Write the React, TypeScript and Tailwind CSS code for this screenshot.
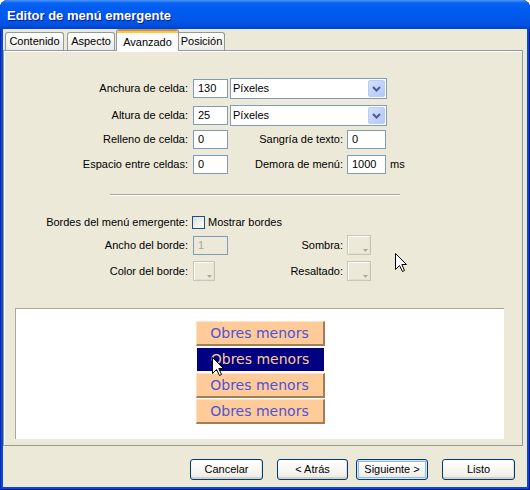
import React from "react";

function Cursor({ className }: { className: string }) {
  return (
    <svg className={className} width="13" height="20" viewBox="0 0 13 20">
      <polygon
        points="0.5,0.5 0.5,16.5 4.5,12.5 7.5,18.5 9.5,17.5 6.8,11.5 11.5,11.5"
        fill="#fff"
        stroke="#000"
        strokeWidth="1"
        strokeLinejoin="miter"
      />
    </svg>
  );
}

function TextBox({ value, w, disabled }: { value: string; w: string; disabled?: boolean }) {
  return (
    <div
      className={`${w} h-[19px] border border-[#7f9db9] flex items-center pl-[4px] ${
        disabled ? "bg-[#ece9d8] text-[#aca899]" : "bg-white text-black"
      }`}
    >
      {value}
    </div>
  );
}

function Select({ value }: { value: string }) {
  return (
    <div className="w-[157px] h-[21px] border border-[#7f9db9] bg-white flex items-center pl-[2px] pr-[1px]">
      <span className="flex-1">{value}</span>
      <div className="w-[17px] h-[17px] rounded-[2px] border border-[#bccbf2] bg-[linear-gradient(135deg,#d6e1fb_0%,#c2d3fb_50%,#b4c7f5_100%)] flex items-center justify-center">
        <svg width="9" height="6" viewBox="0 0 9 6">
          <path d="M1 1 L4.5 4.5 L8 1" stroke="#4d6185" strokeWidth="2" fill="none" />
        </svg>
      </div>
    </div>
  );
}

function ColorBox({ w }: { w: string }) {
  return (
    <div className={`${w} h-[20px] relative border border-[#c8c5b8] shadow-[inset_1px_1px_0_#ffffff,inset_-1px_-1px_0_#e2dfd2] bg-[#ece9d8]`}>
      <svg className="absolute right-[2px] bottom-[2px]" width="5" height="3" viewBox="0 0 5 3">
        <polygon points="0,0 5,0 2.5,3" fill="#aca899" />
      </svg>
    </div>
  );
}

function Button({ label, w, ml, focused }: { label: string; w: string; ml: string; focused?: boolean }) {
  return (
    <div
      className={`${w} ${ml} h-[21px] rounded-[3px] border border-[#003c74] flex items-center justify-center bg-[linear-gradient(to_bottom,#ffffff_0%,#f6f5f1_60%,#ebe9e2_100%)] ${
        focused
          ? "shadow-[inset_0_0_0_1px_#cee7ff,inset_0_0_0_2px_#98b8ea]"
          : "shadow-[inset_0_-2px_0_#d6d0c5,inset_-1px_0_0_#e3e0d6]"
      }`}
    >
      {label}
    </div>
  );
}

function MenuItem({ selected }: { selected?: boolean }) {
  return (
    <div
      className={`w-[129px] h-[25px] flex items-center justify-center text-[14px] ${
        selected
          ? "bg-[#000080] text-[#ffcc99] border-t border-l border-white border-b border-r"
          : "bg-[#ffcc99] text-[#4f52d8] border-t border-l border-[#ffe2c6] border-b-2 border-r-2 border-b-[#a47c56] border-r-[#a47c56]"
      }`}
      style={{ fontFamily: '"DejaVu Sans", Verdana, sans-serif' }}
    >
      Obres menors
    </div>
  );
}

export default function App() {
  return (
    <div
      className="w-[530px] h-[490px] relative text-[11px] text-black"
      style={{ fontFamily: '"Liberation Sans", Arial, sans-serif' }}
    >
      <div className="w-full h-full flex flex-col rounded-t-[8px] overflow-hidden bg-[#0846dc] shadow-[inset_1px_0_0_#0a2aa8,inset_-1px_0_0_#00138c,inset_0_-1px_0_#00138c]">
        {/* Title bar */}
        <div className="h-[29px] shrink-0 flex items-center pl-[7px] pt-[2px] bg-[linear-gradient(to_bottom,#4a97ff_0%,#0a62f0_10%,#005cf2_30%,#0258ea_60%,#0052e2_85%,#0042cc_100%)]">
          <span className="text-white font-bold text-[13px] [text-shadow:1px_1px_0_#0a1e80]">
            Editor de menú emergente
          </span>
        </div>

        {/* Body */}
        <div className="flex-1 mx-[3px] mb-[3px] bg-[#ece9d8] flex flex-col">
          {/* Tabs */}
          <div className="h-[21px] flex items-end shrink-0">
            <div className="ml-[2px] w-[59px] h-[18px] border border-b-0 border-[#919b9c] rounded-t-[3px] bg-[linear-gradient(to_bottom,#ffffff,#ecebe6)] flex items-center justify-center">
              Contenido
            </div>
            <div className="ml-[3px] w-[48px] h-[18px] border border-b-0 border-[#919b9c] rounded-t-[3px] bg-[linear-gradient(to_bottom,#ffffff,#ecebe6)] flex items-center justify-center">
              Aspecto
            </div>
            <div className="ml-[1px] w-[63px] h-[22px] -mb-[1px] relative z-10 border border-b-0 border-[#919b9c] rounded-t-[3px] bg-[#fcfcfe] flex flex-col overflow-hidden">
              <div className="h-[1px] bg-[#e68b2c] shrink-0" />
              <div className="h-[2px] bg-[#ffc73c] shrink-0" />
              <div className="flex-1 flex items-start justify-center pt-[1px]">Avanzado</div>
            </div>
            <div className="w-[46px] h-[18px] border border-b-0 border-l-0 border-[#919b9c] rounded-tr-[3px] bg-[linear-gradient(to_bottom,#ffffff,#ecebe6)] flex items-center justify-center">
              Posición
            </div>
          </div>

          {/* Panel */}
          <div className="h-[396px] mr-[4px] shrink-0 border border-[#919b9c] shadow-[inset_1px_1px_0_#ffffff] bg-[#ece9d8] flex flex-col">
            <div className="pt-[27px] flex flex-col">
              <div className="flex items-center h-[21px]">
                <div className="w-[184px] text-right">Anchura de celda:</div>
                <div className="ml-[5px]"><TextBox value="130" w="w-[35px]" /></div>
                <div className="ml-[2px]"><Select value="Píxeles" /></div>
              </div>
              <div className="flex items-center h-[21px] mt-[6px]">
                <div className="w-[184px] text-right">Altura de celda:</div>
                <div className="ml-[5px]"><TextBox value="25" w="w-[35px]" /></div>
                <div className="ml-[2px]"><Select value="Píxeles" /></div>
              </div>
              <div className="flex items-center h-[19px] mt-[4px]">
                <div className="w-[184px] text-right">Relleno de celda:</div>
                <div className="ml-[5px]"><TextBox value="0" w="w-[35px]" /></div>
                <div className="w-[115px] text-right">Sangría de texto:</div>
                <div className="ml-[4px]"><TextBox value="0" w="w-[39px]" /></div>
              </div>
              <div className="flex items-center h-[19px] mt-[6px]">
                <div className="w-[184px] text-right">Espacio entre celdas:</div>
                <div className="ml-[5px]"><TextBox value="0" w="w-[35px]" /></div>
                <div className="w-[115px] text-right">Demora de menú:</div>
                <div className="ml-[4px]"><TextBox value="1000" w="w-[39px]" /></div>
                <div className="ml-[4px]">ms</div>
              </div>

              <div className="ml-[106px] w-[290px] mt-[20px] h-[2px] border-t border-[#aca899] border-b border-b-white" />

              <div className="flex items-center h-[13px] mt-[20px]">
                <div className="w-[184px] text-right">Bordes del menú emergente:</div>
                <div className="ml-[4px] w-[13px] h-[13px] border border-[#1c5180] bg-[linear-gradient(135deg,#dcdcd7_0%,#f2f2ef_60%,#ffffff_100%)]" />
                <div className="ml-[3px]">Mostrar bordes</div>
              </div>

              <div className="flex items-center h-[20px] mt-[6px]">
                <div className="w-[184px] text-right">Ancho del borde:</div>
                <div className="ml-[5px]"><TextBox value="1" w="w-[35px]" disabled /></div>
                <div className="w-[115px] text-right">Sombra:</div>
                <div className="ml-[4px]"><ColorBox w="w-[24px]" /></div>
              </div>

              <div className="flex items-center h-[20px] mt-[6px]">
                <div className="w-[184px] text-right">Color del borde:</div>
                <div className="ml-[5px]"><ColorBox w="w-[22px]" /></div>
                <div className="w-[128px] text-right">Resaltado:</div>
                <div className="ml-[4px]"><ColorBox w="w-[24px]" /></div>
              </div>

              <div className="ml-[11px] w-[489px] h-[131px] mt-[27px] bg-white border-t border-l border-[#aca899] flex flex-col items-center pt-[12px] gap-[1px]">
                <MenuItem />
                <MenuItem selected />
                <MenuItem />
                <MenuItem />
              </div>
            </div>
          </div>

          <div className="flex items-start mt-[13px]">
            <Button label="Cancelar" w="w-[73px]" ml="ml-[187px]" />
            <Button label="< Atrás" w="w-[71px]" ml="ml-[14px]" />
            <Button label="Siguiente >" w="w-[72px]" ml="ml-[8px]" focused />
            <Button label="Listo" w="w-[73px]" ml="ml-[14px]" />
          </div>
        </div>
      </div>

      <Cursor className="absolute left-[395px] top-[253px]" />
      <Cursor className="absolute left-[212px] top-[357px]" />
    </div>
  );
}
